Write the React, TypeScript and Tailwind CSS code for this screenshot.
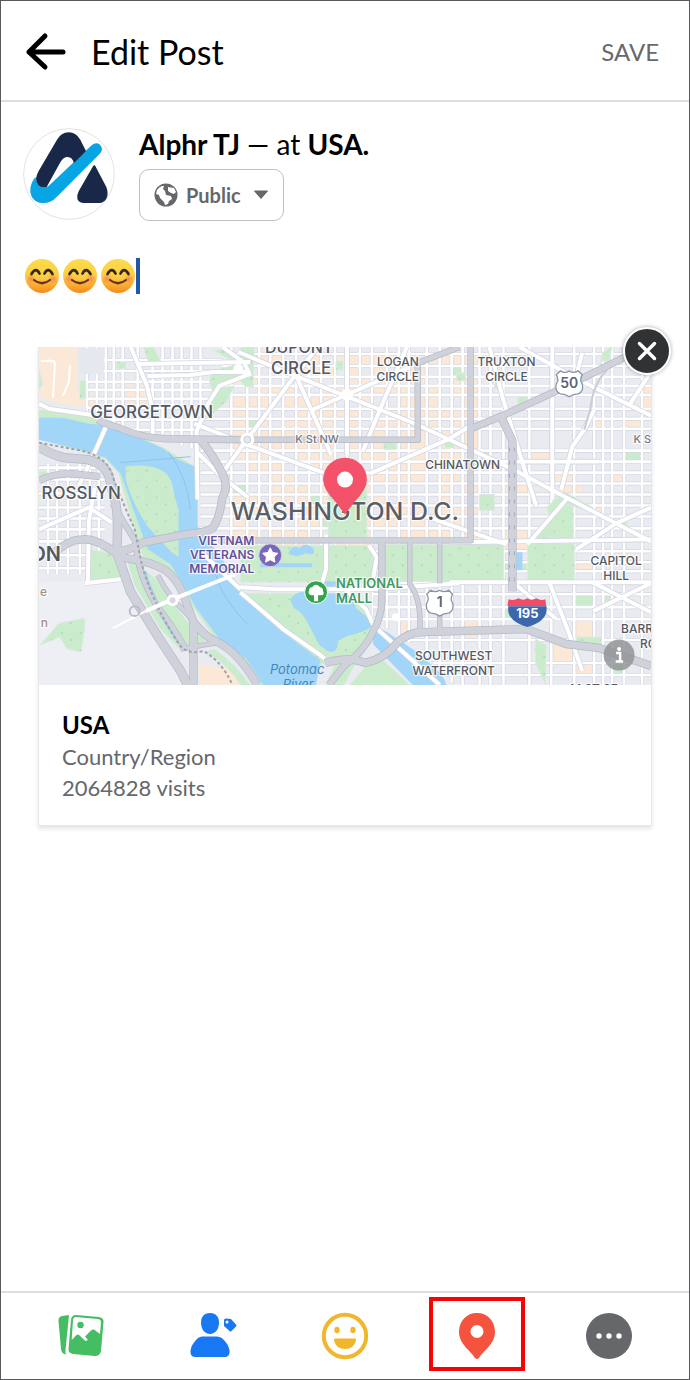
import React from "react";

const park = "#cbebcd";
const water = "#a1d6f8";

const eastColumns = [
  231, 247, 259, 270, 283, 296, 309, 321, 335, 347, 360, 372, 387, 399, 409, 427, 440, 452, 463, 480, 491, 504, 530, 552, 575, 595, 604, 613, 625, 643,
];
const eastRows = [354, 366, 377, 386, 395, 409, 419, 429, 451, 462, 473, 484, 495, 506, 517, 529, 552, 563, 572, 584, 595, 608, 620, 641, 664, 676];
const westColumns = [86, 96, 105, 113, 122, 137, 152, 162, 172, 181, 191, 200];
const westRows = [360, 371, 382, 390, 399, 408, 420, 430];
const rosslynColumns = [47, 56, 67, 79, 89, 98];
const rosslynRows = [468, 480, 494, 508, 519, 530, 542, 556, 569];

const avenues = [
  "M38 404 L48 409 L90 415 L112 425",
  "M130 347 L146 385 L152 410 L152 436",
  "M137 364 L250 362",
  "M147 376 L190 375 L213 372 L250 372",
  "M197 500 L196 432 L207 405 L219 386 L250 374",
  "M222 347 L244 363 L250 376",
  "M194 424 L247 445 L323 473",
  "M196 452 L220 476 L248 438 L293 378 L318 347",
  "M220 476 L248 498",
  "M238 352 L290 374 L413 423 L450 440 L510 468 L567 498 L617 524 L652 542",
  "M297 378 L331 455",
  "M310 411 L408 368",
  "M363 451 L383 403 L407 347",
  "M370 474 L448 440 L471 426",
  "M347 347 L347 410 L347 455",
  "M520 347 L576 378 L652 416",
  "M490 347 L503 397 L520 453 L537 507",
  "M583 353 L577 376",
  "M595 410 L585 430 L573 447 L562 490",
  "M652 372 L631 404",
  "M471 462 L600 462",
  "M553 347 L553 500",
  "M577 550 L617 524 L652 508",
  "M528 545 L567 500",
  "M420 515 L507 545",
  "M450 543 L652 540",
  "M516 585 L557 620",
  "M550 583 L570 635 L583 672",
  "M593 583 L652 613",
  "M652 584 L594 612",
  "M450 583 L652 583",
  "M240 588 L275 590 L372 590 L460 584",
  "M240 593 L283 630 L320 656 L325 660",
  "M326 535 L326 570 L320 590",
  "M369 546 L377 558 L373 580",
  "M345 590 L366 610 L374 627 L440 686",
  "M107 423 L92 457 L78 486",
  "M38 530 L70 516 L88 508 L111 523",
  "M87 583 L88 522 L94 488",
  "M84 584 L120 580",
  "M200 552 L240 590",
];

const highways: [string, number][] = [
  ["M97 420 Q103 424 118 428 Q140 438 165 439 L247 440", 6],
  ["M200 440 Q211 453 221 472 Q229 486 222 498 Q219 520 212 529 Q205 533 185 535 L143 543 Q127 552 113 553", 7],
  ["M250 440 L418 440 L418 363 L460 347", 5],
  ["M471 347 L471 541 L218 541", 5],
  ["M471 429 L505 415 L553 393 L580 380 L640 350", 6],
  ["M502 418 L513 441 L513 592", 7],
  ["M38 447 Q50 455 63 458 L87 460 Q106 465 109 480 L115 504 Q118 520 116 553 L130 593 L157 637 L180 672 L187 686", 8],
  ["M38 481 Q52 474 70 474 L99 477", 6],
  ["M52 555 Q67 540 82 540 Q95 539 114 553 L126 559 Q150 562 165 571 Q177 580 183 596 L193 623 Q204 638 217 643 Q238 653 257 686", 7],
  ["M112 504 Q121 520 135 542 L137 560 Q144 592 163 616 Q178 636 185 650", 5],
  ["M193 622 L193 686", 7],
  ["M157 576 Q170 600 182 610 Q201 630 214 644 L180 650", 4],
  ["M382 543 L382 600 Q382 617 373 633 Q365 651 344 667 L329 686", 6],
  ["M325 664 Q350 657 365 664 Q385 660 397 644 Q410 632 425 633 L527 630 L567 645 L600 649 L652 667", 7],
  ["M410 543 L410 585 Q422 600 420 632", 4],
  ["M440 545 L440 584 M440 613 L440 632", 4],
];

const peachAreas = ["M38 347 H76 V392 L98 397 V408 L60 404 L38 397Z", "M126 385 h18 l8 24 h-26Z", "M48 590 L80 584 L56 614 L47 608Z", "M198 665 L228 670 L240 686 L199 686Z", "M560 474 L583 486 L580 496 L561 493Z", "M643 385 h9 v26 h-14Z"];

const parkAreas = [
  "M143 347 h10 l8 16 h-13Z", "M116 362 h9 v7 h-9Z", "M79 381 h6 v18 h-6Z", "M38 370 l4 14 l-4 6Z", "M212 350 h12 l22 20 l-5 9 l-23 4 l-5 10 q-8 -16 0 -22 l25 -7Z", "M215 389 L234 386 L226 402 L205 420Z",
  "M89 550 L116 555 L121 578 L88 581Z", "M58 624 L84 619 L84 629 L80 653 L66 650 L59 638 L39 646Z", "M240 347 h14 l-1 40 h-8 l-7 -9Z", "M328 480 H367 V538 H328Z", "M240 546 H373 V583 H240Z",
  "M383 545 H504 V582 H383Z", "M528 544 H575 V583 H528Z", "M528 541 L567 501 L574 506 V541Z", "M245 594 H345 L380 627 L357 665 L322 665 L283 630Z", "M480 495 h15 v16 h-15Z", "M547 508 L565 492 L592 507 V512 L568 505 L552 520Z",
  "M457 373 h9 v8 h-9Z", "M518 397 h9 v7 h-9Z", "M495 383 h6 v6 h-6Z", "M617 521 h11 v6 h-11Z", "M445 442 h10 v6 h-10Z", "M384 442 h12 v8 h-12Z", "M336 361 h7 v9 h-7Z",
  "M536 640 L547 646 L546 686 L536 664Z", "M577 638 h25 v10 h-25Z", "M603 353 l10 -7 l-3 15 h-7Z", "M38 472 h8 v8 h-8Z",
];

function pick(a: number, b: number) {
  return (a * 37 + b * 61 + ((a * b) % 13) * 7) % 100;
}

function Blocks() {
  const cells: React.ReactNode[] = [];
  for (let r = 0; r < eastRows.length - 1; r++) {
    for (let c = 0; c < eastColumns.length - 1; c++) {
      const x = eastColumns[c];
      const y = eastRows[r];
      const n = pick(x, y);
      const downtown = x < 465 && y < 530;
      const threshold = downtown ? 62 : 6;
      const fill = n < threshold ? "#fce8d6" : n > 97 ? park : null;
      if (fill) {
        cells.push(<rect key={`${x}-${y}`} x={x} y={y} width={eastColumns[c + 1] - x} height={eastRows[r + 1] - y} fill={fill} />);
      }
    }
  }
  return <g>{cells}</g>;
}

function Streets({ columns, rows, x1, x2, y1, y2 }: { columns: number[]; rows: number[]; x1: number; x2: number; y1: number; y2: number }) {
  const d = columns.map((x) => `M${x} ${y1}V${y2}`).join("") + rows.map((y) => `M${x1} ${y}H${x2}`).join("");
  return (
    <g fill="none">
      <path d={d} stroke="#d3d6e0" strokeWidth="4" />
      <path d={d} stroke="#ffffff" strokeWidth="2.6" />
    </g>
  );
}

function Label({ x, y, size, children, fill = "#55585f", weight = 500, anchor = "middle" }: {
  x: number; y: number; size: number; children: string; fill?: string; weight?: number; anchor?: "start" | "middle" | "end";
}) {
  return (
    <text x={x} y={y} fontSize={size} fill={fill} fontWeight={weight} textAnchor={anchor} stroke="#ffffff" strokeOpacity="0.75" strokeWidth="2.5" strokeLinejoin="round" paintOrder="stroke">
      {children}
    </text>
  );
}

function UsShield({ x, y, children }: { x: number; y: number; children: string }) {
  return (
    <g transform={`translate(${x} ${y})`}>
      <path d="M-9 -12 Q-4 -9 0 -12 Q4 -9 9 -12 L13 -8 Q10 -3 13 1 Q15 8 9 11 Q4 11 0 14 Q-4 11 -9 11 Q-15 8 -13 1 Q-10 -3 -13 -8Z" fill="#fff" stroke="#8a94a8" strokeWidth="1.3" />
      <text y="5" fontSize="14" fontWeight="600" fill="#59647b" textAnchor="middle">{children}</text>
    </g>
  );
}

function CityMap() {
  return (
    <svg viewBox="38 347 614 339" className="block w-full" fontFamily="Inter, 'Liberation Sans', sans-serif" role="img" aria-label="Map of Washington D.C.">
      <defs>
        <clipPath id="east"><path d="M222 347 H652 V686 H455 L420 650 L372 620 L372 547 H205 L199 530 V430 L222 385Z" /></clipPath>
        <clipPath id="west"><path d="M76 347 H222 V385 L199 430 L197 450 L110 425 L86 412Z" /></clipPath>
        <pattern id="trees" width="19" height="17" patternUnits="userSpaceOnUse">
          <circle cx="4" cy="5" r="1" fill="#abd8b1" />
          <circle cx="13" cy="12" r="1" fill="#abd8b1" />
        </pattern>
      </defs>
      <rect x="38" y="347" width="614" height="339" fill="#e9ebf1" />
      <g clipPath="url(#east)"><Blocks /></g>
      {peachAreas.map((d) => <path key={d} d={d} fill="#fce8d6" />)}
      <g clipPath="url(#east)"><Streets columns={eastColumns} rows={eastRows} x1={200} x2={652} y1={347} y2={686} /></g>
      <g clipPath="url(#west)"><Streets columns={westColumns} rows={westRows} x1={76} x2={225} y1={347} y2={450} /></g>
      <rect x="78" y="348" width="25" height="26" fill="#e6e8ef" />
      <Streets columns={rosslynColumns} rows={rosslynRows} x1={38} x2={104} y1={464} y2={575} />
      <path d="M38 583 L120 580 L157 640 L184 686 H38Z" fill="#eeeff4" />
      <path d="M48 360 L54 363 L52 398 M69 365 L68 382 L62 396 M40 361 H54" fill="none" stroke="#fff" strokeWidth="2" />
      {parkAreas.map((d) => (
        <g key={d}><path d={d} fill={park} stroke="#dfe9e4" /><path d={d} fill="url(#trees)" /></g>
      ))}
      <path d="M38 410 L92 417 L110 425 L140 437 L163 448 L193 466 L197 480 L197 527 L222 560 L242 592 L283 630 L322 663 L315 686 H256 L242 664 L217 643 L194 610 L181 588 L165 570 L143 560 L127 507 L118 474 L104 459 L80 452 L38 439Z" fill={park} />
      <path d="M38 418 L62 418 L88 424 L110 426 L143 440 L163 449 L176 459 L194 467 L197 487 L197 527 L222 560 L240 594 L281 632 L320 661 L316 686 H263 L246 660 L219 640 L195 608 L183 586 L170 565 L147 550 L132 508 L120 474 L105 458 L80 450 L38 440Z" fill={water} />
      <path d="M125 467 Q149 463 163 472 Q172 478 174 497 L178 510 V558 L170 552 L147 527 Q131 503 125 480Z" fill={park} />
      <path d="M125 467 Q149 463 163 472 Q172 478 174 497 L178 510 V558 L170 552 L147 527 Q131 503 125 480Z" fill="url(#trees)" />
      <path d="M126 560 Q145 570 155 580 L186 622 L205 642 L180 651 L160 630 L134 586Z" fill={park} />
      <path d="M143 572 Q152 604 177 640" fill="none" stroke={water} strokeWidth="5" />
      <path d="M214 650 Q235 665 250 686 H240 Q228 665 205 653Z" fill={park} />
      <path d="M290 601 Q295 592 304 593 L350 595 L355 608 L373 623 Q374 631 347 637 L338 642 Q338 654 330 653 L320 647 L308 625 Q303 613 294 609Z" fill={water} />
      <path d="M373 626 L387 633 L417 653 L442 675 L447 686 H413 L373 645Z" fill={water} />
      <path d="M260 564 H312 V568 H260Z M288 554 Q293 544 299 549 Q306 542 313 549 Q317 557 305 554 Q296 560 288 554Z M322 582 H350 V588 H322Z M517 553 h6 v18 h-6Z" fill={water} />
      <path d="M335 665 L355 665 L344 686 H326Z M376 655 L410 686 H350Z" fill={park} />
      <path d="M120 463 L190 457 M168 453 Q186 475 190 510 M215 575 Q222 600 247 625" stroke="#8fc3ea" fill="none" />
      <g fill="none" strokeLinejoin="round">
        {avenues.map((d) => <path key={d} d={d} stroke="#d3d7e1" strokeWidth="5.6" />)}
        {avenues.map((d) => <path key={d} d={d} stroke="#fff" strokeWidth="4" />)}
        {highways.map(([d, w]) => <path key={d} d={d} stroke="#b4b9c5" strokeWidth={w + 1.4} />)}
        {highways.map(([d, w]) => <path key={d} d={d} stroke="#cfd2db" strokeWidth={w} />)}
        <path d="M608 370 Q594 383 591 410 L585 430" stroke="#c8ccd5" strokeWidth="2" />
        <path d="M38 443 L75 450 Q108 455 113 480 Q123 505 134 530 L140 560 Q150 602 179 646 Q187 656 203 652 Q222 663 232 686" stroke="#a1a2ad" strokeWidth="2" strokeDasharray="3 2.5" />
        <path d="M515 448 V590 M510 448 V590" stroke="#a5abb9" strokeDasharray="4 9" />
        <path d="M112 629 L145 612" stroke="#fff" strokeWidth="2" />
        <path d="M145 612 L170 601 L235 575" stroke="#fff" strokeWidth="4" />
        <circle cx="134" cy="612" r="5" stroke="#b8bdc8" strokeWidth="2" />
      </g>
      <circle cx="172" cy="601" r="6" fill="#fff" /><circle cx="172" cy="601" r="3" fill="#d5d8df" />
      <circle cx="247" cy="440" r="7" fill="#fff" /><circle cx="247" cy="440" r="3.5" fill="#e7e8ed" stroke="#c7cbd4" />
      <circle cx="238" cy="369" r="5" fill="#fff" /><circle cx="347" cy="395" r="6" fill="#fff" /><circle cx="396" cy="618" r="4" fill="#fff" />

      <Label x={299} y={353} size={16}>DUPONT</Label>
      <Label x={301} y={374} size={17}>CIRCLE</Label>
      <Label x={398} y={366} size={12}>LOGAN</Label>
      <Label x={398} y={381} size={12}>CIRCLE</Label>
      <Label x={507} y={366} size={12}>TRUXTON</Label>
      <Label x={507} y={381} size={12}>CIRCLE</Label>
      <Label x={151} y={418} size={17}>GEORGETOWN</Label>
      <Label x={317} y={443} size={11} fill="#767a83">K St NW</Label>
      <Label x={652} y={443} size={11} fill="#767a83" anchor="end">K S</Label>
      <Label x={463} y={469} size={12}>CHINATOWN</Label>
      <Label x={120} y={500} size={17} anchor="end">ROSSLYN</Label>
      <Label x={60} y={562} size={20} anchor="end" weight={600}>ON</Label>
      <Label x={46} y={597} size={12} anchor="end" fill="#a88e7c">e</Label>
      <Label x={47} y={628} size={12} anchor="end" fill="#a88e7c">n</Label>
      <Label x={345} y={521} size={25} fill="#5b5e65">WASHINGTON D.C.</Label>
      <Label x={254} y={546} size={12} anchor="end" weight={600} fill="#65519b">VIETNAM</Label>
      <Label x={254} y={560} size={12} anchor="end" weight={600} fill="#65519b">VETERANS</Label>
      <Label x={254} y={574} size={12} anchor="end" weight={600} fill="#65519b">MEMORIAL</Label>
      <Label x={336} y={589} size={13} anchor="start" weight={600} fill="#40985d">NATIONAL</Label>
      <Label x={336} y={604} size={13} anchor="start" weight={600} fill="#40985d">MALL</Label>
      <Label x={617} y={566} size={12}>CAPITOL</Label>
      <Label x={617} y={581} size={12}>HILL</Label>
      <Label x={454} y={661} size={12}>SOUTHWEST</Label>
      <Label x={454} y={676} size={12}>WATERFRONT</Label>
      <Label x={622} y={634} size={12} anchor="start">BARR</Label>
      <Label x={641} y={649} size={12} anchor="start">RO</Label>
      <Label x={595} y={694} size={12}>M ST SE</Label>
      <g fill="#4787bd" fontSize="13" fontStyle="italic" fontWeight="400" textAnchor="middle">
        <text x="297" y="675">Potomac</text><text x="298" y="690">River</text>
      </g>

      <circle cx="270" cy="556" r="11.5" fill="#7967b9" stroke="#d8d4ed" />
      <path d="M270 548.5 L272.4 553.2 L277.6 554 L273.8 557.7 L274.7 562.9 L270 560.4 L265.3 562.9 L266.2 557.7 L262.4 554 L267.6 553.2Z" fill="#fff" stroke="#fff" strokeLinejoin="round" />
      <circle cx="316" cy="593" r="11.5" fill="#35a24c" stroke="#fff" />
      <path d="M314 602 V596 H311 Q307 595 309 591 Q309 588 312 588 Q316 583 320 588 Q323 588 323 592 Q325 596 321 596 H318 V602Z" fill="#fff" />
      <UsShield x={570} y={383}>50</UsShield>
      <UsShield x={440} y={603}>1</UsShield>
      <path d="M509 600 Q514 602 519 599 Q524 602 528 599 Q532 602 537 599 Q542 602 546 600 L547 607 H508Z" fill="#f24b68" />
      <path d="M509 607 H547 Q550 621 528 628 Q506 621 509 607Z" fill="#3c67ad" />
      <text x="528" y="619" fontSize="13" fontWeight="700" fill="#fff" textAnchor="middle">195</text>
      <path d="M345 515 Q341 510 336 503 Q323 490 323 480 A22 22 0 0 1 367 480 Q367 490 354 503 Q349 510 345 515Z" fill="#f4526a" />
      <circle cx="345" cy="480" r="8" fill="#fff" />
      <circle cx="620" cy="656" r="15.5" fill="#8f9193" fillOpacity="0.82" />
      <circle cx="620" cy="650" r="2" fill="#fff" />
      <path d="M617 654 H621 V662 M616.5 662.5 H624" stroke="#fff" strokeWidth="2.5" fill="none" />
    </svg>
  );
}

function Logo() {
  return (
    <svg viewBox="69 383 276 276" className="size-[92px] shrink-0" role="img" aria-label="Alphr TJ">
      <circle cx="207" cy="521" r="136" fill="#fff" stroke="#e3e3e6" strokeWidth="3" />
      <path d="M106 529 Q82 562 95 589 Q108 609 130 608 Q153 608 171 589 L301 459 Q311 444 300 433 Q288 424 275 435 L145 558 Q130 565 119 554 Q108 545 106 529Z" fill="#08a5e5" />
      <path d="M108 535 Q109 525 116 512 L171 418 Q183 397 206 396 Q229 397 241 418 L258 452 L222 488 Q217 470 203 470 Q190 470 181 486 L140 560 Q110 564 108 535Z" fill="#192748" />
      <path d="M283 494 Q286 496 289 503 L319 560 Q327 581 319 595 Q312 607 298 608 H252 Q237 608 232 595 Q230 585 236 573 L273 508 Q280 495 283 494Z" fill="#192748" />
    </svg>
  );
}

function Smile({ id }: { id: string }) {
  return (
    <svg viewBox="0 0 36 36" className="size-9" role="img" aria-label="Smiling face">
      <defs>
        <linearGradient id={id} x1="0" y1="0" x2="0" y2="1"><stop offset="0" stopColor="#fbdc4b" /><stop offset="0.55" stopColor="#fdcb43" /><stop offset="1" stopColor="#f58a1d" /></linearGradient>
        <radialGradient id={`${id}-cheek`}><stop offset="0" stopColor="#f3705d" stopOpacity="0.75" /><stop offset="1" stopColor="#f58a4d" stopOpacity="0" /></radialGradient>
      </defs>
      <circle cx="18" cy="18" r="17" fill={`url(#${id})`} />
      <circle cx="7" cy="21" r="5.5" fill={`url(#${id}-cheek)`} /><circle cx="29" cy="21" r="5.5" fill={`url(#${id}-cheek)`} />
      <path d="M7.500 16 Q12 8.500 15.500 15.500 M20.500 15.500 Q24 8.500 28.500 16" fill="none" stroke="#35291d" strokeWidth="2.7" strokeLinecap="round" />
      <path d="M10 22 Q18 28.500 26 22" fill="none" stroke="#68321a" strokeWidth="2.2" strokeLinecap="round" />
    </svg>
  );
}

function PhotosIcon() {
  return (
    <svg viewBox="0 0 48 48" className="size-12" aria-hidden="true">
      <path d="M12 3 L5 4 Q1 5 1.500 9 L4 37 Q4.500 42 9.500 42.500 Q8 41 8.500 38Z" fill="#45bd62" />
      <path d="M19 3 L42 5 Q47 6 46.500 10 L44 39 Q43 44 38 44 L16 42 Q11 41 11.500 37 L14 8 Q14.500 3 19 3Z" fill="#45bd62" />
      <path d="M18.500 5 L41 7 Q44 7.500 44 10 L43 22 L37 17.500 Q35.500 17 34 18.500 L28 24.500 L31 28 L28.500 29 L22 23 Q20.500 22 19 23.500 L14.700 28 L16 8 Q16.500 5 18.500 5Z" fill="#fff" />
      <circle cx="23.500" cy="13" r="3.200" fill="#45bd62" />
    </svg>
  );
}

function TagIcon() {
  return (
    <svg viewBox="0 0 48 48" className="size-12" aria-hidden="true" fill="#1877f2">
      <path d="M21 1 C27 1 30 5 30 10.500 C30 17 26.500 22 21 22 C15.500 22 12 17 12 10.500 C12 5 15 1 21 1Z" />
      <path d="M13 24.500 H28 Q33 24.500 37 30.500 Q40.500 35 40.500 40 Q40.500 45 35.500 45 H6.500 Q1.500 45 1.500 40 Q1.500 35 5 30.500 Q9 24.500 13 24.500Z" />
      <path d="M35 8 Q35 6.500 37 6.500 L42 7 L47 12.500 Q48 13.500 47 14.500 L42.500 19 Q41.500 20 40.500 19 L35 14Z M39.500 10 A1.500 1.500 0 1 0 36.500 10 A1.500 1.500 0 1 0 39.500 10Z" fillRule="evenodd" />
    </svg>
  );
}

function FeelingIcon() {
  return (
    <svg viewBox="0 0 48 48" className="size-12" aria-hidden="true" fill="#f0b62c">
      <circle cx="24" cy="24" r="21.200" fill="none" stroke="#f0b62c" strokeWidth="4" />
      <ellipse cx="16" cy="18" rx="2.700" ry="3.200" /><ellipse cx="32" cy="18" rx="2.700" ry="3.200" />
      <path d="M14 26.500 H34 Q35.500 26.500 35 28.500 Q33 37 24 37 Q15 37 13 28.500 Q12.500 26.500 14 26.500Z" />
    </svg>
  );
}

function PlaceIcon() {
  return (
    <svg viewBox="0 0 48 48" className="size-12" aria-hidden="true">
      <path d="M24 1 C34 1 42 8.500 42 20 C42 32 30 39 26 46 Q24 48 22 46 C18 39 6 32 6 20 C6 8.500 14 1 24 1Z" fill="#f5533d" />
      <circle cx="24" cy="19.500" r="6.500" fill="#fff" />
    </svg>
  );
}

function MoreIcon() {
  return (
    <svg viewBox="0 0 48 48" className="size-12" aria-hidden="true">
      <circle cx="24" cy="24" r="23" fill="#65676b" />
      <g fill="#fff"><circle cx="14" cy="24" r="2.700" /><circle cx="24" cy="24" r="2.700" /><circle cx="34" cy="24" r="2.700" /></g>
    </svg>
  );
}

const tools = [
  { name: "Photos", icon: <PhotosIcon /> },
  { name: "Tag people", icon: <TagIcon /> },
  { name: "Feeling", icon: <FeelingIcon /> },
  { name: "Check in", icon: <PlaceIcon />, selected: true },
  { name: "More", icon: <MoreIcon /> },
];

export default function App() {
  return (
    <div className="flex min-h-screen flex-col border border-[#59595b] bg-white font-[Lato,sans-serif] text-black">
      <header className="flex items-center border-b-2 border-[#dedede] pt-[26px] pr-[30px] pb-[23px] pl-6">
        <button aria-label="Back" className="mr-6">
          <svg viewBox="0 0 42 42" className="size-[42px]" fill="none" stroke="#000" strokeWidth="5" strokeLinecap="round" strokeLinejoin="round" aria-hidden="true"><path d="M20 5 L4 21 L20 36 M4 21 H38" /></svg>
        </button>
        <h1 className="flex-1 text-[34px] leading-[50px]">Edit Post</h1>
        <button className="text-2xl text-[#67686b]">SAVE</button>
      </header>

      <main className="flex-1">
        <section className="flex gap-6 pt-[26px] pl-[22px]">
          <Logo />
          <div>
            <p className="text-[28px] leading-8"><b>Alphr TJ</b> — at <b>USA.</b></p>
            <button aria-haspopup="listbox" className="mt-[9px] flex h-[52px] items-center gap-2 rounded-[10px] border border-[#bebfc5] px-[14px] text-xl font-bold text-[#65676b]">
              <svg viewBox="0 0 24 24" className="size-6" aria-hidden="true">
                <circle cx="12" cy="12" r="11.500" fill="#65676b" />
                <path d="M3 7 Q5 4 8 3 L10 3 L9 6 L11 8 L12 12 L17 13 L18 16 L15 18 L14 21 L11 22 L10 19 L6 15 L5 12 L2 11Z M14 4 L20 5 L22 9 L20 11 L17 10 L14 8Z" fill="#fff" />
              </svg>
              Public
              <svg viewBox="0 0 16 10" className="ml-1 h-[10px] w-4" aria-hidden="true"><path d="M1.500 1 H14.500 L8 8.500Z" fill="#65676b" stroke="#65676b" strokeLinejoin="round" /></svg>
            </button>
          </div>
        </section>

        <section className="mt-[35px] flex h-10 items-center pl-[23px]">
          <div className="flex items-center gap-[2px]"><Smile id="smile-a" /><Smile id="smile-b" /><Smile id="smile-c" /></div>
          <span className="h-9 w-1 bg-[#1d58a9]" />
          <textarea aria-label="Post text" rows={1} className="h-9 flex-1 resize-none outline-none" />
        </section>

        <article className="relative mx-[37px] mt-[51px] border border-t-0 border-[#e6e7e9] shadow-[0_3px_4px_#0000001a]">
          <CityMap />
          <div className="px-[23px] pt-[23px] pb-[22px] text-[22px] leading-[31px] text-[#65676b]">
            <h2 className="text-2xl leading-[33px] font-bold text-black">USA</h2>
            <p>Country/Region</p>
            <p>2064828 visits</p>
          </div>
          <button aria-label="Remove location" className="absolute -top-5 -right-5 flex size-12 items-center justify-center rounded-full border-2 border-white bg-[#313234] shadow-[0_0_4px_#00000055]">
            <svg viewBox="0 0 24 24" className="size-6" fill="none" stroke="#fff" strokeWidth="3.500" strokeLinecap="round" aria-hidden="true"><path d="M4.500 4.500 L19.500 19.500 M19.500 4.500 L4.500 19.500" /></svg>
          </button>
        </article>
      </main>

      <footer className="grid grid-cols-5 border-t-2 border-[#dedede] px-[14px] pt-1 pb-2">
        {tools.map((tool) => (
          <div key={tool.name} className="flex justify-center">
            <button aria-label={tool.name} className={tool.selected ? "flex h-[74px] w-24 items-center justify-center border-4 border-[#f90206] pt-1" : "flex h-[74px] w-24 items-center justify-center pt-1"}>
              {tool.icon}
            </button>
          </div>
        ))}
      </footer>
    </div>
  );
}
